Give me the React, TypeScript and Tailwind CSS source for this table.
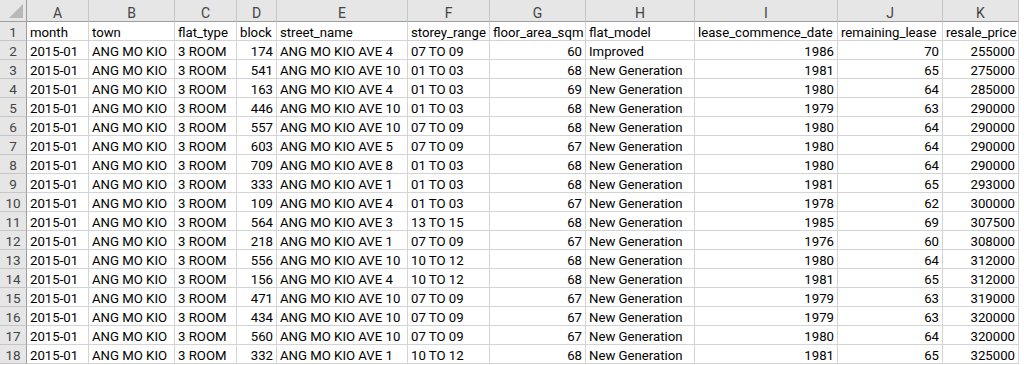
import React from 'react';

const cols = ['A', 'B', 'C', 'D', 'E', 'F', 'G', 'H', 'I', 'J', 'K'];

// true = number (right aligned)
const numeric = [false, false, false, true, false, false, true, false, true, true, true];

const header = ['month', 'town', 'flat_type', 'block', 'street_name', 'storey_range', 'floor_area_sqm', 'flat_model', 'lease_commence_date', 'remaining_lease', 'resale_price'];

const raw: [string, string, string, string, string, string, string, string][] = [
  ['174', 'ANG MO KIO AVE 4', '07 TO 09', '60', 'Improved', '1986', '70', '255000'],
  ['541', 'ANG MO KIO AVE 10', '01 TO 03', '68', 'New Generation', '1981', '65', '275000'],
  ['163', 'ANG MO KIO AVE 4', '01 TO 03', '69', 'New Generation', '1980', '64', '285000'],
  ['446', 'ANG MO KIO AVE 10', '01 TO 03', '68', 'New Generation', '1979', '63', '290000'],
  ['557', 'ANG MO KIO AVE 10', '07 TO 09', '68', 'New Generation', '1980', '64', '290000'],
  ['603', 'ANG MO KIO AVE 5', '07 TO 09', '67', 'New Generation', '1980', '64', '290000'],
  ['709', 'ANG MO KIO AVE 8', '01 TO 03', '68', 'New Generation', '1980', '64', '290000'],
  ['333', 'ANG MO KIO AVE 1', '01 TO 03', '68', 'New Generation', '1981', '65', '293000'],
  ['109', 'ANG MO KIO AVE 4', '01 TO 03', '67', 'New Generation', '1978', '62', '300000'],
  ['564', 'ANG MO KIO AVE 3', '13 TO 15', '68', 'New Generation', '1985', '69', '307500'],
  ['218', 'ANG MO KIO AVE 1', '07 TO 09', '67', 'New Generation', '1976', '60', '308000'],
  ['556', 'ANG MO KIO AVE 10', '10 TO 12', '68', 'New Generation', '1980', '64', '312000'],
  ['156', 'ANG MO KIO AVE 4', '10 TO 12', '68', 'New Generation', '1981', '65', '312000'],
  ['471', 'ANG MO KIO AVE 10', '07 TO 09', '67', 'New Generation', '1979', '63', '319000'],
  ['434', 'ANG MO KIO AVE 10', '07 TO 09', '67', 'New Generation', '1979', '63', '320000'],
  ['560', 'ANG MO KIO AVE 10', '07 TO 09', '67', 'New Generation', '1980', '64', '320000'],
  ['332', 'ANG MO KIO AVE 1', '10 TO 12', '68', 'New Generation', '1981', '65', '325000'],
];

const rows = raw.map((r) => ['2015-01', 'ANG MO KIO', '3 ROOM', ...r]);

const App: React.FC = () => {
  return (
    <div className="w-[1024px] h-[365px] overflow-hidden bg-white font-['Roboto','Liberation_Sans',sans-serif] text-[13.2px] text-black">
      <div className="grid grid-cols-[27px_62px_86px_62px_40px_131px_82px_96px_109px_143px_105px_76px] auto-rows-[19px] [grid-template-rows:22px]">
        {/* corner */}
        <div className="relative bg-[#e6e6e6] border-r border-b border-[#9e9e9e] h-[22px]">
          <div className="absolute right-[3px] bottom-[3px] w-0 h-0 border-l-[14px] border-l-transparent border-b-[14px] border-b-[#b8b8b8]" />
        </div>
        {cols.map((c) => (
          <div key={c} className="flex items-center justify-center h-[22px] pt-[5px] leading-none bg-[#e6e6e6] border-r border-b border-r-[#c6c6c6] border-b-[#9e9e9e] text-[#444] text-[14px]">
            {c}
          </div>
        ))}
        {[header, ...rows].map((row, i) => (
          <React.Fragment key={i}>
            <div className="flex items-end justify-center pb-[1px] leading-none bg-[#e6e6e6] border-r border-b border-r-[#9e9e9e] border-b-[#c6c6c6] text-[#444] text-[13.5px]">
              {i + 1}
            </div>
            {row.map((v, j) => (
              <div
                key={j}
                className={
                  'flex items-end pb-[1px] px-[3px] leading-none whitespace-nowrap overflow-x-clip border-r border-b border-[#d4d4d4] ' +
                  (i > 0 && numeric[j] ? 'justify-end' : 'justify-start')
                }
              >
                {v}
              </div>
            ))}
          </React.Fragment>
        ))}
      </div>
    </div>
  );
};

export default App;
